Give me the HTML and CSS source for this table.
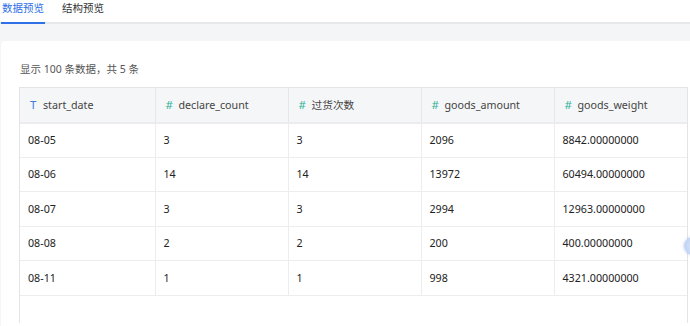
FILE: index.html
```html
<!DOCTYPE html>
<html lang="zh">
<head>
<meta charset="utf-8">
<link rel="stylesheet" href="styles.css">
</head>
<body>
<div class="tabs">
  <div class="tab active">数据预览</div>
  <div class="tab">结构预览</div>
</div>
<div class="main">
  <div class="card">
    <div class="summary">显示 100 条数据，共 5 条</div>
    <div class="table-wrap">
      <table class="grid">
        <colgroup>
          <col class="c1"><col class="c2"><col class="c3"><col class="c4"><col class="c5">
        </colgroup>
        <thead>
          <tr>
            <th><span class="ic ic-t">T</span>start_date</th>
            <th><span class="ic ic-n">#</span>declare_count</th>
            <th><span class="ic ic-n">#</span>过货次数</th>
            <th><span class="ic ic-n">#</span>goods_amount</th>
            <th><span class="ic ic-n">#</span>goods_weight</th>
          </tr>
        </thead>
        <tbody>
          <tr><td>08-05</td><td>3</td><td>3</td><td>2096</td><td>8842.00000000</td></tr>
          <tr><td>08-06</td><td>14</td><td>14</td><td>13972</td><td>60494.00000000</td></tr>
          <tr><td>08-07</td><td>3</td><td>3</td><td>2994</td><td>12963.00000000</td></tr>
          <tr><td>08-08</td><td>2</td><td>2</td><td>200</td><td>400.00000000</td></tr>
          <tr><td>08-11</td><td>1</td><td>1</td><td>998</td><td>4321.00000000</td></tr>
        </tbody>
      </table>
    </div>
    <div class="float-btn"></div>
  </div>
</div>
</body>
</html>
```
FILE: styles.css
```css
* { box-sizing: border-box; }
html, body {
  margin: 0;
  padding: 0;
  width: 690px;
  height: 326px;
  overflow: hidden;
  background: #fff;
  font-family: "Noto Sans", "Noto Sans CJK SC", sans-serif;
  color: #222;
}
.tabs {
  display: flex;
  gap: 16px;
  height: 24px;
  padding-left: 1px;
  border-bottom: 2px solid #e6e7e9;
  background: #fff;
}
.tab {
  font-size: 10.5px;
  line-height: 14px;
  padding: 1px 1px 0;
  height: 22px;
  color: #333;
  position: relative;
}
.tab.active {
  color: #2f6fe8;
}
.tab.active::after {
  content: "";
  position: absolute;
  left: 0;
  right: 0;
  bottom: -2px;
  height: 2px;
  background: #2f6fe8;
}
.main {
  background: #f4f5f7;
  padding: 17px 0 0 1px;
  height: 302px;
}
.card {
  position: relative;
  background: #fff;
  border-radius: 4px 0 0 0;
  padding: 0 0 0 18px;
  height: 285px;
}
.summary {
  font-size: 10.5px;
  line-height: 16px;
  color: #555;
  padding: 20px 0 10px 1px;
}
.table-wrap {
  width: 669px;
  height: 236px;
  border: 1px solid #e3e4e6;
  border-bottom: none;
}
.grid {
  width: 667px;
  border-collapse: collapse;
  table-layout: fixed;
  font-size: 10.7px;
}
.c1 { width: 135px; }
.c2, .c3, .c4 { width: 133px; }
.c5 { width: 133px; }
.grid th {
  background: #f5f6f7;
  height: 34.5px;
  font-weight: normal;
  color: #444;
  text-align: left;
  padding: 0 0 0 10px;
  border-right: 1px solid #e6e7e9;
  border-bottom: 2px solid #ececee;
  white-space: nowrap;
}
.grid td {
  height: 34.5px;
  padding: 0 0 0 8px;
  text-align: left;
  border-right: 1px solid #ededee;
  border-bottom: 1px solid #ededee;
  color: #222;
  white-space: nowrap;
}
.grid th:last-child, .grid td:last-child { border-right: none; }
.ic {
  display: inline-block;
  width: 13px;
  font-size: 11.5px;
  font-weight: normal;
}
.ic-t { color: #3f7ee0; }
.ic-n { color: #2fb39b; }
.float-btn {
  position: absolute;
  left: 683px;
  top: 196px;
  width: 18px;
  height: 18px;
  border-radius: 50%;
  background: radial-gradient(circle at 60% 50%, #dfe9fb 0%, #c6d7f5 60%, #b8cdf2 100%);
  box-shadow: 0 0 3px rgba(90, 130, 210, 0.45);
}
```
